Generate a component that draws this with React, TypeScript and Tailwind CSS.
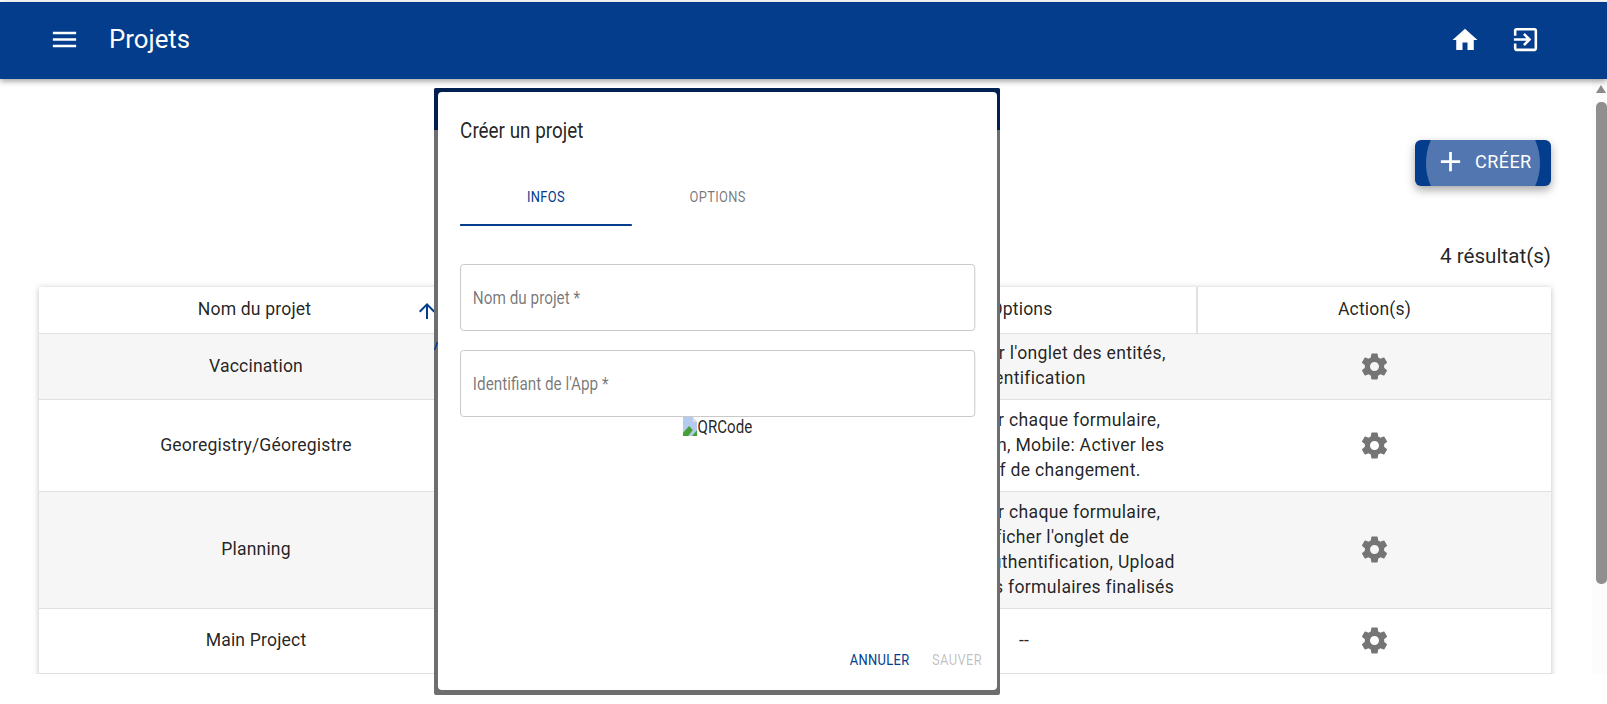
const MENU = "M3 18h18v-2H3v2zm0-5h18v-2H3v2zm0-7v2h18V6H3z";
const HOME = "M10 20v-6h4v6h5v-8h3L12 3 2 12h3v8z";
const EXIT = "M10.09 15.59L11.5 17l5-5-5-5-1.41 1.41L12.67 11H3v2h9.67l-2.58 2.59zM19 3H5c-1.11 0-2 .9-2 2v4h2V5h14v14H5v-4H3v4c0 1.1.89 2 2 2h14c1.1 0 2-.9 2-2V5c0-1.1-.9-2-2-2z";
const GEAR = "M19.43 12.98c.04-.32.07-.64.07-.98s-.03-.66-.07-.98l2.11-1.65c.19-.15.24-.42.12-.64l-2-3.46c-.12-.22-.39-.3-.61-.22l-2.49 1c-.52-.4-1.08-.73-1.69-.98l-.38-2.65C14.46 2.18 14.25 2 14 2h-4c-.25 0-.46.18-.49.42l-.38 2.65c-.61.25-1.17.59-1.69.98l-2.49-1c-.23-.09-.49 0-.61.22l-2 3.46c-.13.22-.07.49.12.64l2.11 1.65c-.04.32-.07.65-.07.98s.03.66.07.98l-2.11 1.65c-.19.15-.24.42-.12.64l2 3.46c.12.22.39.3.61.22l2.49-1c.52.4 1.08.73 1.69.98l.38 2.65c.03.24.24.42.49.42h4c.25 0 .46-.18.49-.42l.38-2.65c.61-.25 1.17-.59 1.69-.98l2.49 1c.23.09.49 0 .61-.22l2-3.46c.12-.22.07-.49-.12-.64l-2.11-1.65zM12 15.5c-1.93 0-3.5-1.57-3.5-3.5s1.57-3.5 3.5-3.5 3.5 1.57 3.5 3.5-1.57 3.5-3.5 3.5z";
const UP = "M4 12l1.41 1.41L11 7.83V20h2V7.83l5.58 5.59L20 12l-8-8-8 8z";
const PLUS = "M19 13h-6v6h-2v-6H5v-2h6V5h2v6h6v2z";

function Icon({ d, className }: { d: string; className: string }) {
  return (
    <svg viewBox="0 0 24 24" fill="currentColor" className={className}>
      <path d={d} />
    </svg>
  );
}

const rows = [
  { name: "Vaccination", h: "h-[66px]", bg: "bg-[#f6f6f6]", lines: ["Mobile: Afficher l'onglet des entités,", "Authentification"] },
  { name: "Georegistry/Géoregistre", h: "h-[92px]", bg: "bg-white", lines: ["Mobile: Vérifier chaque formulaire,", "Authentification, Mobile: Activer les", "Pour le motif de changement."] },
  { name: "Planning", h: "h-[117px]", bg: "bg-[#f6f6f6]", lines: ["Mobile: Vérifier chaque formulaire,", "Mobile: Afficher l'onglet de", "Mobile: Mode authentification, Upload", "Web: Upload des formulaires finalisés"] },
  { name: "Main Project", h: "h-[65px]", bg: "bg-white", lines: ["--"] },
];

export default function App() {
  return (
    <div className="relative h-[704px] w-[1607px] overflow-hidden bg-white pt-[2px] font-['Roboto',sans-serif] text-[#000000de]">
      <header className="relative z-20 flex h-[77px] items-center bg-[#033d8c] pb-[2px] pl-[48.5px] pr-[66px] text-white shadow-[0_2px_6px_rgba(0,0,0,0.4)]">
        <Icon d={MENU} className="h-[31px] w-[31px]" />
        <h1 className="ml-[29.5px] text-[25.8px] leading-none font-normal">Projets</h1>
        <div className="ml-auto flex items-center gap-[30px]">
          <Icon d={HOME} className="h-[30px] w-[30px]" />
          <Icon d={EXIT} className="h-[31px] w-[31px]" />
        </div>
      </header>

      <div className="flex h-[595px]">
        <main className="w-[1592px] overflow-hidden pl-[39px] pr-[41px]">
          <div className="flex justify-end pt-[61px]">
            <button className="relative flex h-[46px] w-[136px] items-center overflow-hidden rounded-[6px] bg-[#033d8c] pb-[3px] pl-[19px] text-white shadow-[0_4px_10px_rgba(0,0,0,0.35)]">
              <span className="absolute top-[-34px] left-[11px] h-[114px] w-[114px] rounded-full bg-[#5277b0]" />
              <Icon d={PLUS} className="relative h-[33px] w-[33px]" />
              <span className="relative ml-[8px] text-[18px] font-normal tracking-[0.45px]">CRÉER</span>
            </button>
          </div>
          <p className="mt-[56px] mb-[17px] h-[28px] text-right text-[20.6px] leading-[28px]">4 résultat(s)</p>
          <div className="h-[410px] shadow-[0_1px_6px_rgba(0,0,0,0.25)]">
            <table className="w-[1512px] table-fixed border-collapse text-center text-[17.6px] leading-[25px] tracking-[0.165px]">
              <colgroup>
                <col className="w-[434px]" />
                <col className="w-[378px]" />
                <col className="w-[346px]" />
                <col className="w-[354px]" />
              </colgroup>
              <thead>
                <tr className="h-[46px] border-b border-[#e0e0e0] bg-white">
                  <th className="relative pr-[3px] font-normal">
                    Nom du projet
                    <Icon d={UP} className="absolute top-[12px] right-[34px] h-[24px] w-[24px] text-[#033d8c]" />
                  </th>
                  <th className="font-normal">Type</th>
                  <th className="border-r-2 border-[#e0e0e0] pr-[4px] font-normal">Options</th>
                  <th className="font-normal">Action(s)</th>
                </tr>
              </thead>
              <tbody>
                {rows.map((r) => (
                  <tr key={r.name} className={`${r.h} ${r.bg} border-b border-[#e0e0e0]`}>
                    <td>{r.name}</td>
                    <td></td>
                    <td className={r.lines.length > 1 ? "pr-[6px] tracking-[0.3px]" : ""}>
                      {r.lines.map((l) => (
                        <div key={l} className="whitespace-nowrap">{l}</div>
                      ))}
                    </td>
                    <td>
                      <Icon d={GEAR} className="mx-auto h-[31px] w-[31px] text-[#757575]" />
                    </td>
                  </tr>
                ))}
              </tbody>
            </table>
          </div>
        </main>
        <aside className="flex w-[15px] flex-col items-end bg-[#fcfcfc] pt-[6px]">
          <div className="mr-[1px] h-0 w-0 border-x-[5px] border-b-[8px] border-x-transparent border-b-[#8a8a8a]" />
          <div className="mt-[9px] h-[482px] w-[11px] rounded-[5px] bg-[#8f8f8f]" />
        </aside>
      </div>

      <div className="absolute top-[88px] left-[434px] z-10 h-[607px] w-[566px] overflow-hidden rounded-[2px] bg-[#6e6e6e] p-[3.5px] pt-[4px] pb-[5px]">
        <div className="absolute top-0 left-0 h-[42px] w-full bg-[#02204f]" />
        <svg viewBox="0 0 4 8" className="absolute top-[254px] left-0 h-[8px] w-[4px]">
          <path d="M0.5 8L3.5 0" stroke="#033d8c" strokeWidth="1.5" />
        </svg>
        <div className="relative h-full overflow-hidden rounded-[4px] bg-white">
          <div className="flex h-full w-[659px] origin-top-left scale-x-[0.85] flex-col px-[26px] text-[#000000de]">
            <h2 className="pt-[22px] text-[22.2px] leading-[32px] font-normal">Créer un projet</h2>
            <div className="mt-[24px] flex h-[56px] text-[15.2px] font-normal tracking-[0.4px]">
              <div className="flex w-[202px] items-center justify-center border-b-[2.5px] border-[#033d8c] text-[#033d8c]">INFOS</div>
              <div className="flex w-[202px] items-center justify-center border-b-[2.5px] border-transparent text-[#0000008a]">OPTIONS</div>
            </div>
            <div className="mt-[38px] flex h-[67px] w-[606px] items-center rounded-[4px] border border-[#c4c4c4] pl-[14px] text-[18px] text-[#0000008a]">Nom du projet *</div>
            <div className="mt-[19px] flex h-[67px] w-[606px] items-center rounded-[4px] border border-[#c4c4c4] pl-[14px] text-[18px] text-[#0000008a]">Identifiant de l'App *</div>
            <div className="flex w-[606px] items-start justify-center text-[17.8px] leading-[20px] text-[#000000de]">
              <svg viewBox="0 0 16 19" preserveAspectRatio="none" className="h-[19px] w-[17px] shrink-0">
                <path d="M0 0h11l5 5v14H0z" fill="#b4cbee" />
                <path d="M11 0l5 5h-5z" fill="#dcdcdc" />
                <path d="M0 19v-3l7-7 4 4-5 6z" fill="#45a035" />
                <path d="M10 19l6-6v6z" fill="#45a035" />
              </svg>
              <span>QRCode</span>
            </div>
            <div className="-mr-[7px] mt-auto flex justify-end gap-[26.5px] pb-[20px] text-[15.2px] leading-[20px] font-normal tracking-[0.4px]">
              <span className="text-[#033d8c]">ANNULER</span>
              <span className="text-[#00000042]">SAUVER</span>
            </div>
          </div>
        </div>
      </div>
    </div>
  );
}
